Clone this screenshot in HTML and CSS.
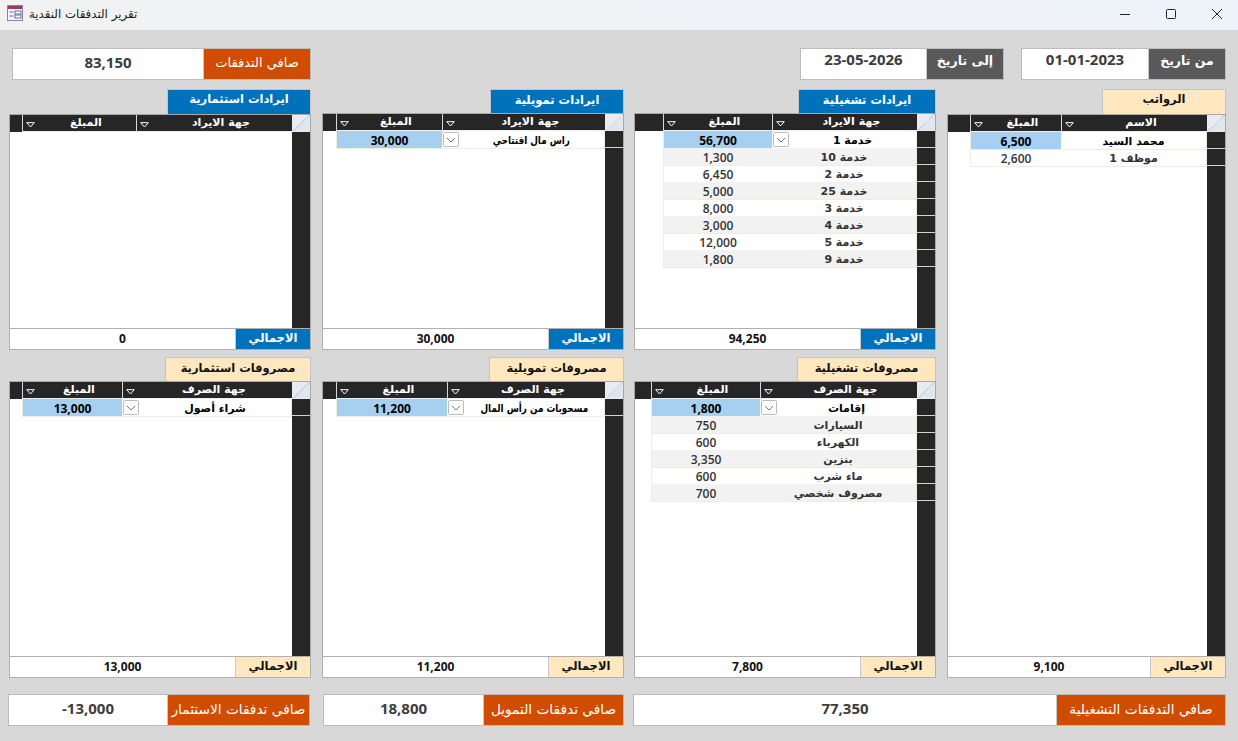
FILE: index.html
```html
<!DOCTYPE html>
<html lang="ar">
<head>
<meta charset="utf-8">
<title>تقرير التدفقات النقدية</title>
<link rel="stylesheet" href="styles.css">
</head>
<body>
<header class="titlebar">
  <svg class="app-icon" width="16" height="16" viewBox="0 0 16 16"><rect x=".5" y=".5" width="15" height="15" fill="#f6f4fa" stroke="#8d7fa8"/><rect x="1" y="1" width="14" height="3" fill="#a5375f"/><path d="M2.500 7h4M2.500 11h4" stroke="#5d6f96" stroke-width="1.200"/><rect x="8" y="6" width="6" height="3" fill="#fff" stroke="#5d6f96"/><rect x="8" y="10" width="6" height="3" fill="#fff" stroke="#5d6f96"/></svg>
  <span class="window-title" dir="rtl">تقرير التدفقات النقدية</span>
  <div class="window-controls">
    <svg class="win-btn" width="12" height="12" viewBox="0 0 12 12"><path d="M1 6.500h10" stroke="#222" fill="none"/></svg>
    <svg class="win-btn" width="12" height="12" viewBox="0 0 12 12"><rect x="1.500" y="1.500" width="9" height="9" rx="1" stroke="#222" fill="none"/></svg>
    <svg class="win-btn" width="12" height="12" viewBox="0 0 12 12"><path d="M1 1l10 10M11 1L1 11" stroke="#222" fill="none"/></svg>
  </div>
</header>

<section class="top-row">
  <div class="kpi kpi-net"><div class="kpi-value">83,150</div><div class="kpi-label orange w-net" dir="rtl">صافي التدفقات</div></div>
  <div class="kpi kpi-to"><div class="kpi-value date">23-05-2026</div><div class="kpi-label gray w-date" dir="rtl">إلى تاريخ</div></div>
  <div class="kpi kpi-from"><div class="kpi-value date">01-01-2023</div><div class="kpi-label gray w-date" dir="rtl">من تاريخ</div></div>
</section>

<main class="panels">
  <!-- investing income -->
  <section class="panel narrow">
    <div class="panel-title blue tall t144" dir="rtl">ايرادات استثمارية</div>
    <div class="sheet cols-inv">
      <div class="sheet-main">
        <div class="row head"><i></i><div class="hcell"><svg class="filter" viewBox="0 0 9 6"><path d="M.7.7h7.600L4.500 5z"/></svg><span dir="rtl">المبلغ</span></div><div class="hcell"><svg class="filter" viewBox="0 0 9 6"><path d="M.7.7h7.600L4.500 5z"/></svg><span dir="rtl">جهة الايراد</span></div></div>
      </div>
      <div class="selectors"><div class="corner"></div></div>
    </div>
    <div class="total"><div class="total-value">0</div><div class="total-label blue" dir="rtl">الاجمالي</div></div>
  </section>

  <!-- financing income -->
  <section class="panel">
    <div class="panel-title blue t134" dir="rtl">ايرادات تمويلية</div>
    <div class="sheet cols-fin">
      <div class="sheet-main">
        <div class="row head"><i></i><div class="hcell"><svg class="filter" viewBox="0 0 9 6"><path d="M.7.7h7.600L4.500 5z"/></svg><span dir="rtl">المبلغ</span></div><div class="hcell"><svg class="filter" viewBox="0 0 9 6"><path d="M.7.7h7.600L4.500 5z"/></svg><span dir="rtl">جهة الايراد</span></div></div>
        <div class="row data current"><i></i><div class="money sel">30,000</div><div class="name has-combo"><svg class="combo" viewBox="0 0 16 15"><rect x=".5" y=".5" width="15" height="14" rx="1"/><path d="M4 6l4 4 4-4"/></svg><span class="squeeze" dir="rtl">راس مال افتتاحي</span></div></div>
      </div>
      <div class="selectors"><div class="corner"></div><div class="sel-cell"></div></div>
    </div>
    <div class="total"><div class="total-value">30,000</div><div class="total-label blue" dir="rtl">الاجمالي</div></div>
  </section>

  <!-- operating income -->
  <section class="panel narrow">
    <div class="panel-title blue t138" dir="rtl">ايرادات تشغيلية</div>
    <div class="sheet cols-op">
      <div class="sheet-main">
        <div class="row head"><i></i><div class="hcell"><svg class="filter" viewBox="0 0 9 6"><path d="M.7.7h7.600L4.500 5z"/></svg><span dir="rtl">المبلغ</span></div><div class="hcell"><svg class="filter" viewBox="0 0 9 6"><path d="M.7.7h7.600L4.500 5z"/></svg><span dir="rtl">جهة الايراد</span></div></div>
        <div class="row data current"><i></i><div class="money sel">56,700</div><div class="name has-combo"><svg class="combo" viewBox="0 0 16 15"><rect x=".5" y=".5" width="15" height="14" rx="1"/><path d="M4 6l4 4 4-4"/></svg><span dir="rtl">خدمة 1</span></div></div>
        <div class="row data alt"><i></i><div class="money">1,300</div><div class="name"><span dir="rtl">خدمة 10</span></div></div>
        <div class="row data"><i></i><div class="money">6,450</div><div class="name"><span dir="rtl">خدمة 2</span></div></div>
        <div class="row data alt"><i></i><div class="money">5,000</div><div class="name"><span dir="rtl">خدمة 25</span></div></div>
        <div class="row data"><i></i><div class="money">8,000</div><div class="name"><span dir="rtl">خدمة 3</span></div></div>
        <div class="row data alt"><i></i><div class="money">3,000</div><div class="name"><span dir="rtl">خدمة 4</span></div></div>
        <div class="row data"><i></i><div class="money">12,000</div><div class="name"><span dir="rtl">خدمة 5</span></div></div>
        <div class="row data alt"><i></i><div class="money">1,800</div><div class="name"><span dir="rtl">خدمة 9</span></div></div>
      </div>
      <div class="selectors"><div class="corner"></div><div class="sel-cell"></div><div class="sel-cell"></div><div class="sel-cell"></div><div class="sel-cell"></div><div class="sel-cell"></div><div class="sel-cell"></div><div class="sel-cell"></div><div class="sel-cell"></div></div>
    </div>
    <div class="total"><div class="total-value">94,250</div><div class="total-label blue" dir="rtl">الاجمالي</div></div>
  </section>

  <!-- salaries -->
  <section class="panel span-two">
    <div class="panel-title cream tall t124" dir="rtl">الرواتب</div>
    <div class="sheet cols-sal">
      <div class="sheet-main">
        <div class="row head"><i></i><div class="hcell"><svg class="filter" viewBox="0 0 9 6"><path d="M.7.7h7.600L4.500 5z"/></svg><span dir="rtl">المبلغ</span></div><div class="hcell"><svg class="filter" viewBox="0 0 9 6"><path d="M.7.7h7.600L4.500 5z"/></svg><span dir="rtl">الاسم</span></div></div>
        <div class="row data current"><i></i><div class="money sel">6,500</div><div class="name"><span dir="rtl">محمد السيد</span></div></div>
        <div class="row data"><i></i><div class="money">2,600</div><div class="name"><span dir="rtl">موظف 1</span></div></div>
      </div>
      <div class="selectors"><div class="corner"></div><div class="sel-cell"></div><div class="sel-cell"></div></div>
    </div>
    <div class="total"><div class="total-value">9,100</div><div class="total-label cream" dir="rtl">الاجمالي</div></div>
  </section>

  <!-- investing expenses -->
  <section class="panel narrow">
    <div class="panel-title cream t146" dir="rtl">مصروفات استثمارية</div>
    <div class="sheet cols-inv2">
      <div class="sheet-main">
        <div class="row head"><i></i><div class="hcell"><svg class="filter" viewBox="0 0 9 6"><path d="M.7.7h7.600L4.500 5z"/></svg><span dir="rtl">المبلغ</span></div><div class="hcell"><svg class="filter" viewBox="0 0 9 6"><path d="M.7.7h7.600L4.500 5z"/></svg><span dir="rtl">جهة الصرف</span></div></div>
        <div class="row data current"><i></i><div class="money sel">13,000</div><div class="name has-combo"><svg class="combo" viewBox="0 0 16 15"><rect x=".5" y=".5" width="15" height="14" rx="1"/><path d="M4 6l4 4 4-4"/></svg><span dir="rtl">شراء أصول</span></div></div>
      </div>
      <div class="selectors"><div class="corner"></div><div class="sel-cell"></div></div>
    </div>
    <div class="total"><div class="total-value">13,000</div><div class="total-label cream" dir="rtl">الاجمالي</div></div>
  </section>

  <!-- financing expenses -->
  <section class="panel">
    <div class="panel-title cream t135" dir="rtl">مصروفات تمويلية</div>
    <div class="sheet cols-fin2">
      <div class="sheet-main">
        <div class="row head"><i></i><div class="hcell"><svg class="filter" viewBox="0 0 9 6"><path d="M.7.7h7.600L4.500 5z"/></svg><span dir="rtl">المبلغ</span></div><div class="hcell"><svg class="filter" viewBox="0 0 9 6"><path d="M.7.7h7.600L4.500 5z"/></svg><span dir="rtl">جهة الصرف</span></div></div>
        <div class="row data current"><i></i><div class="money sel">11,200</div><div class="name has-combo"><svg class="combo" viewBox="0 0 16 15"><rect x=".5" y=".5" width="15" height="14" rx="1"/><path d="M4 6l4 4 4-4"/></svg><span class="squeeze" dir="rtl">مسحوبات من رأس المال</span></div></div>
      </div>
      <div class="selectors"><div class="corner"></div><div class="sel-cell"></div></div>
    </div>
    <div class="total"><div class="total-value">11,200</div><div class="total-label cream" dir="rtl">الاجمالي</div></div>
  </section>

  <!-- operating expenses -->
  <section class="panel narrow">
    <div class="panel-title cream t139" dir="rtl">مصروفات تشغيلية</div>
    <div class="sheet cols-op2">
      <div class="sheet-main">
        <div class="row head"><i></i><div class="hcell"><svg class="filter" viewBox="0 0 9 6"><path d="M.7.7h7.600L4.500 5z"/></svg><span dir="rtl">المبلغ</span></div><div class="hcell"><svg class="filter" viewBox="0 0 9 6"><path d="M.7.7h7.600L4.500 5z"/></svg><span dir="rtl">جهة الصرف</span></div></div>
        <div class="row data current"><i></i><div class="money sel">1,800</div><div class="name has-combo"><svg class="combo" viewBox="0 0 16 15"><rect x=".5" y=".5" width="15" height="14" rx="1"/><path d="M4 6l4 4 4-4"/></svg><span dir="rtl">إقامات</span></div></div>
        <div class="row data alt"><i></i><div class="money">750</div><div class="name"><span dir="rtl">السيارات</span></div></div>
        <div class="row data"><i></i><div class="money">600</div><div class="name"><span dir="rtl">الكهرباء</span></div></div>
        <div class="row data alt"><i></i><div class="money">3,350</div><div class="name"><span dir="rtl">بنزين</span></div></div>
        <div class="row data"><i></i><div class="money">600</div><div class="name"><span dir="rtl">ماء شرب</span></div></div>
        <div class="row data alt"><i></i><div class="money">700</div><div class="name"><span dir="rtl">مصروف شخصي</span></div></div>
      </div>
      <div class="selectors"><div class="corner"></div><div class="sel-cell"></div><div class="sel-cell"></div><div class="sel-cell"></div><div class="sel-cell"></div><div class="sel-cell"></div><div class="sel-cell"></div></div>
    </div>
    <div class="total"><div class="total-value">7,800</div><div class="total-label cream" dir="rtl">الاجمالي</div></div>
  </section>
</main>

<footer class="bottom-row">
  <div class="kpi net-inv"><div class="kpi-value">-13,000</div><div class="kpi-label orange small-label w-inv" dir="rtl">صافي تدفقات الاستثمار</div></div>
  <div class="kpi net-fin"><div class="kpi-value">18,800</div><div class="kpi-label orange small-label w-fin" dir="rtl">صافي تدفقات التمويل</div></div>
  <div class="kpi net-op"><div class="kpi-value">77,350</div><div class="kpi-label orange small-label w-op" dir="rtl">صافي التدفقات التشغيلية</div></div>
</footer>
</body>
</html>
```

FILE: styles.css
```css
* { box-sizing: border-box; }
html, body { margin: 0; height: 100%; }
body {
  width: 1238px;
  height: 741px;
  overflow: hidden;
  background: #d8d8d8;
  font-family: "Open Sans", "DejaVu Sans", sans-serif;
  color: #222;
  display: flex;
  flex-direction: column;
}

/* window chrome */
.titlebar {
  height: 30px;
  display: flex;
  align-items: center;
  padding-left: 7px;
  background: linear-gradient(90deg, #f2f2f2 0%, #eef2fa 100%);
}
.app-icon { flex: none; margin-right: 6px; margin-top: -5px; }
.window-title { font-size: 11.800px; color: #222; font-family: "DejaVu Sans", sans-serif; margin-top: -2px; }
.window-controls { margin-left: auto; display: flex; gap: 34px; padding-right: 15px; margin-top: -3px; }
.win-btn { display: block; }

/* KPI boxes */
.top-row {
  display: flex;
  height: 32px;
  margin-top: 18px;
  padding: 0 12px;
}
.bottom-row {
  display: flex;
  height: 32px;
  margin-top: 16px;
  padding-left: 8px;
  padding-right: 12px;
}
.kpi { display: flex; height: 32px; border: 1px solid #bcbcbc; background: #fff; }
.kpi-value {
  flex: 1;
  text-align: center;
  font-size: 15px;
  font-weight: 700;
  line-height: 27px;
  color: #3c3c3c;
}
.kpi-value.date { line-height: 20px; }
.kpi-label {
  flex: none;
  text-align: center;
  color: #fff;
  font-family: "DejaVu Sans", sans-serif;
  font-size: 13px;
  font-weight: 400;
  line-height: 28px;
  border-left: 1px solid #c8c8c8;
  white-space: nowrap;
  overflow: hidden;
}
.small-label { font-size: 13.700px; }
.orange { background: #cf4c00; }
.gray { background: #595959; font-weight: 700; font-size: 12.500px; line-height: 24px; }
.kpi-net { width: 299px; }
.kpi-to { width: 204px; margin-left: auto; }
.kpi-from { width: 205px; margin-left: 17px; }
.w-net { width: 107px; }
.w-date { width: 77px; }
.net-inv { width: 302px; }
.net-fin { width: 301px; margin-left: 13px; }
.net-op { width: 593px; margin-left: 9px; }
.w-inv { width: 142px; }
.w-fin { width: 140px; }
.w-op { width: 169px; }

/* panels */
.panels {
  display: grid;
  grid-template-columns: 303px 302px 303px 279px;
  grid-template-rows: 261px 321px;
  column-gap: 10px;
  row-gap: 7px;
  margin-top: 9px;
  padding-left: 9px;
}
.panel { display: flex; flex-direction: column; justify-content: flex-end; min-height: 0; }
.panel.narrow { width: 302px; }
.span-two { grid-column: 4; grid-row: 1 / span 2; }
.panel-title {
  align-self: flex-end;
  flex: none;
  height: 24px;
  text-align: center;
  font-family: "DejaVu Sans", sans-serif;
  font-size: 11.500px;
  font-weight: 700;
  line-height: 20px;
  border: 1px solid #c4c4c4;
  border-bottom: 0;
  white-space: nowrap;
}
.panel-title.tall { height: 25px; line-height: 18px; }
.t124 { width: 124px; }
.t134 { width: 134px; }
.t135 { width: 135px; }
.t138 { width: 138px; }
.t139 { width: 139px; }
.t144 { width: 144px; }
.t146 { width: 146px; }
.blue { background: #0072bc; color: #fff; }
.cream { background: #ffe8bf; color: #111; }

/* datasheet */
.sheet {
  flex: 1;
  display: flex;
  min-height: 0;
  background: #fff;
  border: 1px solid #a8a8a8;
  border-bottom: 0;
}
.sheet-main { flex: 1; min-width: 0; }
.selectors {
  flex: none;
  background: #262626;
  width: 18px;
}
.corner {
  height: 17px;
  background: linear-gradient(135deg, #e8ecf1 50%, #c9d5e1 50%, #c9d5e1 54%, #e1e7ee 54%);
  border-bottom: 1px solid #e9edf2;
}
.sel-cell { height: 17px; border-bottom: 1px solid #d2d2d2; }

.row { display: grid; height: 17px; }
.cols-inv .row { grid-template-columns: 12px 114px 1fr; }
.cols-fin .row { grid-template-columns: 13px 106px 1fr; }
.cols-op .row { grid-template-columns: 28px 109px 1fr; }
.cols-sal .row { grid-template-columns: 22px 91px 1fr; }
.cols-inv2 .row { grid-template-columns: 12px 100px 1fr; }
.cols-fin2 .row { grid-template-columns: 13px 111px 1fr; }
.cols-op2 .row { grid-template-columns: 16px 109px 1fr; }

.head { background: #262626; color: #fff; }
.hcell {
  position: relative;
  border-left: 1px solid #d8d8d8;
  border-bottom: 1px solid #eee;
  padding-left: 13px;
  text-align: center;
  font-family: "DejaVu Sans", sans-serif;
  font-size: 11px;
  font-weight: 700;
  line-height: 16px;
  white-space: nowrap;
}
.filter {
  position: absolute;
  left: 3px;
  top: 7px;
  width: 9px;
  height: 6px;
  fill: #262626;
  stroke: #fff;
  stroke-width: 1;
}

.data { color: #333; }
.data > i { background: #fff; }
.money, .name {
  text-align: center;
  font-size: 12px;
  font-weight: 600;
  border-bottom: 1px solid #efece2;
  position: relative;
  white-space: nowrap;
}
.money { border-left: 1px solid #efece2; padding-top: 3px; line-height: 14px; }
.name {
  border-right: 1px solid #efece2;
  font-family: "DejaVu Sans", sans-serif;
  font-size: 11px;
  padding-top: 2px;
  line-height: 15px;
}
.name.has-combo { padding-left: 17px; }
.squeeze { display: inline-block; transform: scaleX(.8); }
.alt .money, .alt .name { background: #f2f2f2; }
.current { color: #000; }
.current .money, .current .name { font-weight: 700; }
.money.sel { background: #a6cff0; }
.combo {
  position: absolute;
  left: 1px;
  top: 1px;
  width: 16px;
  height: 15px;
  fill: #fff;
  stroke: #bbb;
}
.combo path { fill: none; stroke: #777; }

/* totals */
.total {
  flex: none;
  height: 22px;
  display: flex;
  background: #fff;
  border: 1px solid #b0b0b0;
}
.total-value {
  flex: 1;
  text-align: center;
  font-size: 12px;
  font-weight: 700;
  line-height: 19px;
  color: #111;
}
.total-label {
  flex: none;
  width: 75px;
  text-align: center;
  font-family: "DejaVu Sans", sans-serif;
  font-size: 11.500px;
  font-weight: 700;
  line-height: 19px;
  border-left: 1px solid #c8c8c8;
}
```
